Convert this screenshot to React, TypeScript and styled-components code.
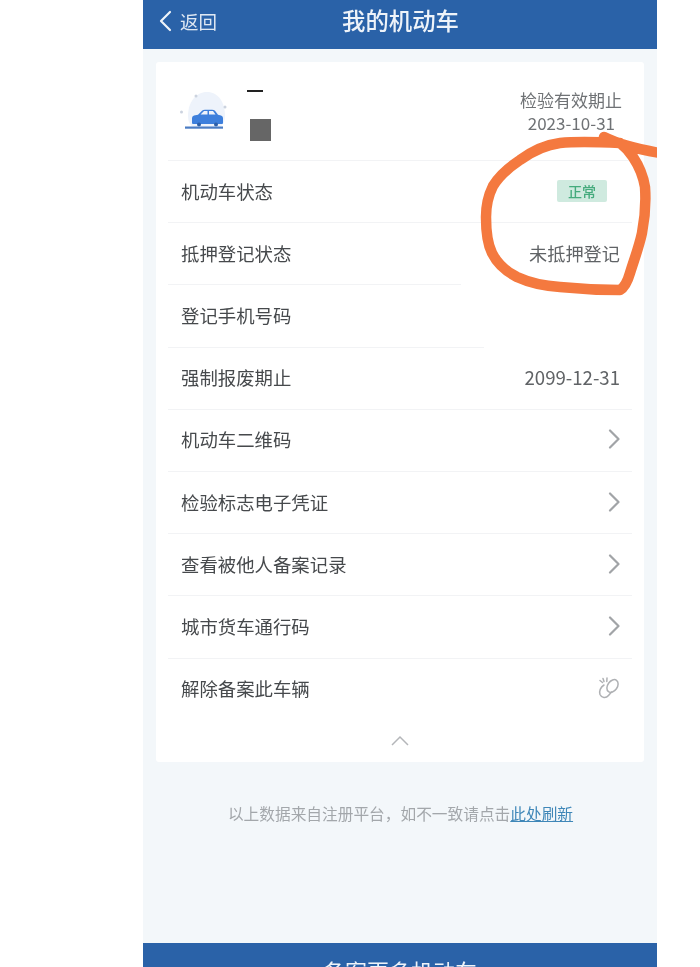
import React from 'react';
import styled, { createGlobalStyle } from 'styled-components';

const Global = createGlobalStyle`
    html, body {
        margin: 0;
        padding: 0;
        background: #fff;
        font-family: "Noto Sans CJK SC", "Noto Sans", sans-serif;
    }
`
const Phone = styled.div`
    position: relative;
    display: flex;
    flex-direction: column;
    width: 514px;
    height: 967px;
    margin-left: 143px;
    overflow: hidden;
    background: #f3f7fa;
    filter: blur(0.4px);
`
const TopBar = styled.header`
    position: relative;
    flex: none;
    display: flex;
    align-items: center;
    justify-content: center;
    height: 49px;
    padding-bottom: 9px;
    box-sizing: border-box;
    background: #2a62a8;
    color: #eef3f9;
`
const Back = styled.div`
    position: absolute;
    left: 15px;
    top: 10px;
    display: flex;
    align-items: center;
    gap: 8px;
    font-size: 18.5px;
    line-height: 22px;
    color: #dfe8f3;
`
const Title = styled.h1`
    margin: 0 0 0 1px;
    font-size: 23.4px;
    font-weight: 500;
    line-height: 30px;
`
const Card = styled.section`
    flex: none;
    margin: 13px 13px 0;
    background: #fff;
    border-radius: 3px;
`
const Summary = styled.div`
    display: flex;
    align-items: flex-start;
    justify-content: space-between;
    height: 98px;
    padding: 26px 22px 0 24px;
    box-sizing: border-box;
`
const Owner = styled.div`
    display: flex;
    gap: 15px;
`
const Redacted = styled.div`
    display: flex;
    flex-direction: column;
    width: 24px;
`
const Scribble = styled.div`
    width: 16px;
    height: 2px;
    margin-top: 2px;
    background: #222;
`
const Block = styled.div`
    width: 21px;
    height: 22px;
    margin: 27px 0 0 3px;
    background: #666;
`
const Expiry = styled.div`
    font-size: 17px;
    line-height: 23px;
    color: #6f7275;
    text-align: right;
`
const ExpiryDate = styled.div`
    margin-right: 7px;
`
const Row = styled.div<{ $line?: number }>`
    position: relative;
    display: flex;
    align-items: center;
    justify-content: space-between;
    height: 62.2px;
    padding: 0 24px 1px 25px;
    box-sizing: border-box;
    &::before {
        content: "";
        position: absolute;
        top: 0;
        left: 12px;
        width: ${p => p.$line ?? 464}px;
        height: 1px;
        background: #f2f3f5;
    }
`
const Label = styled.span`
    font-size: 18.4px;
    line-height: 24px;
    color: #46494c;
`
const Value = styled.span<{ $size?: number }>`
    font-size: ${p => p.$size ?? 18.2}px;
    line-height: 24px;
    color: #606366;
`
const Badge = styled.span`
    display: flex;
    align-items: center;
    justify-content: center;
    width: 50px;
    height: 22px;
    margin-right: 13px;
    background: #cfeadf;
    border-radius: 2px;
    font-size: 14px;
    font-weight: 500;
    color: #45ab7d;
`
const Collapse = styled.div`
    display: flex;
    justify-content: center;
    height: 42px;
    padding-top: 15px;
    box-sizing: border-box;
`
const Note = styled.p`
    flex: none;
    margin: 41px 0 0 1px;
    font-size: 15.7px;
    line-height: 22px;
    color: #a3a7ab;
    text-align: center;
`
const Refresh = styled.a`
    color: #3f87b8;
    text-decoration: underline;
`
const BottomBar = styled.div`
    flex: none;
    margin-top: auto;
    height: 24px;
    padding-top: 12px;
    box-sizing: border-box;
    overflow: hidden;
    background: #2a62a8;
    color: #eef3f9;
    font-size: 22px;
    line-height: 30px;
    text-align: center;
`
const Circle = styled.svg`
    position: absolute;
    left: 0;
    top: 0;
    pointer-events: none;
`

const Chevron = () => (
    <svg width="12" height="20" viewBox="0 0 12 20" fill="none" stroke="#a1a4a7" strokeWidth="2.2" strokeLinecap="round" strokeLinejoin="round">
        <path d="M2 1.500 10.500 10 2 18.500" />
    </svg>
)

const BackArrow = () => (
    <svg width="14" height="22" viewBox="0 0 14 22" fill="none" stroke="#eef3f9" strokeWidth="2.2" strokeLinecap="round" strokeLinejoin="round">
        <path d="M12 2 3 11l9 9" />
    </svg>
)

const Unlink = () => (
    <svg width="22" height="22" viewBox="0 0 22 22" fill="none" stroke="#aeb0b3" strokeWidth="1.5" strokeLinecap="round">
        <ellipse cx="14.500" cy="9" rx="4.800" ry="7" transform="rotate(35 14.500 9)" />
        <path d="M6 8C2.500 10 .8 14.500 2 17.500 3.500 21 8 21.500 10.500 18.500L13.500 15" />
        <path d="M5 1.500 6 4.500M9 1 8.800 4.500M2 3.500 4.500 5.500" />
    </svg>
)

const CarIcon = () => (
    <svg width="52" height="50" viewBox="0 0 52 50">
        <path d="M8 28C8 14 16 4 27 4s18 10 18 24q0 9-6 11H14q-6-2-6-11z" fill="#eef3fb" />
        <circle cx="1.500" cy="24" r="1.500" fill="#ccd3df" />
        <circle cx="16" cy="8" r="1.500" fill="#ccd3df" />
        <circle cx="45" cy="19" r="1.500" fill="#ccd3df" />
        <path d="M12 35v-5q0-2 2-2.500l4-.8 4-4q1-1 3-1h7q2 0 3 1l3 4 3 .8q2 .5 2 2.500v5q0 1-1 1H13q-1 0-1-1z" fill="#3d7fdc" />
        <path d="M20.500 26.500l3.500-3.500h3.500v3.500zM29 23h4l2.500 3.500H29z" fill="#eef3fb" />
        <circle cx="19" cy="36.500" r="2" fill="#2d5fa8" />
        <circle cx="36" cy="36.500" r="2" fill="#2d5fa8" />
        <rect x="5" y="38.500" width="38" height="2.200" fill="#4a7cc4" />
    </svg>
)

const links = ['机动车二维码', '检验标志电子凭证', '查看被他人备案记录', '城市货车通行码']

export default function App() {
    return (
        <Phone>
            <Global />
            <TopBar>
                <Back><BackArrow />返回</Back>
                <Title>我的机动车</Title>
            </TopBar>
            <Card>
                <Summary>
                    <Owner>
                        <CarIcon />
                        <Redacted>
                            <Scribble />
                            <Block />
                        </Redacted>
                    </Owner>
                    <Expiry>
                        检验有效期止
                        <ExpiryDate>2023-10-31</ExpiryDate>
                    </Expiry>
                </Summary>
                <Row>
                    <Label>机动车状态</Label>
                    <Badge>正常</Badge>
                </Row>
                <Row>
                    <Label>抵押登记状态</Label>
                    <Value>未抵押登记</Value>
                </Row>
                <Row $line={293}>
                    <Label>登记手机号码</Label>
                </Row>
                <Row $line={316}>
                    <Label>强制报废期止</Label>
                    <Value $size={18.6}>2099-12-31</Value>
                </Row>
                {links.map(label => (
                    <Row key={label}>
                        <Label>{label}</Label>
                        <Chevron />
                    </Row>
                ))}
                <Row>
                    <Label>解除备案此车辆</Label>
                    <Unlink />
                </Row>
                <Collapse>
                    <svg width="18" height="11" viewBox="0 0 18 11" fill="none" stroke="#b4b6b9" strokeWidth="1.5">
                        <path d="M1 10 9 2l8 8" />
                    </svg>
                </Collapse>
            </Card>
            <Note>以上数据来自注册平台，如不一致请点击<Refresh>此处刷新</Refresh></Note>
            <BottomBar>备案更多机动车</BottomBar>
            <Circle width="514" height="967" viewBox="143 0 514 967" fill="none">
                <path
                    d="M660 153C642 150 622 146 604 137M620 143C600 142 578 141 560 143 544 145 531 152 520 160 508 168 499 176 493 186 488 196 486 207 486 217 486 232 488 245 492 253 498 265 507 272 517 277 530 283 545 286 560 287 580 289 600 290 620 290 625 287 628 280 630 273 634 260 639 247 642 233 645 218 646 202 645 187 643 175 639 166 633 157 629 151 625 147 620 143"
                    stroke="#f4793f"
                    strokeWidth="10.500"
                    strokeLinecap="round"
                    strokeLinejoin="round"
                />
            </Circle>
        </Phone>
    );
}
